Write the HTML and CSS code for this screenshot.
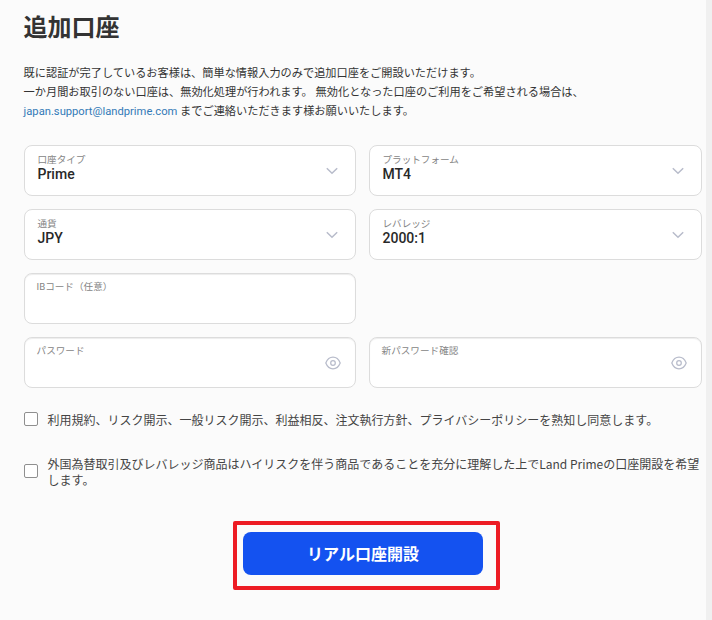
FILE: index.html
```html
<!DOCTYPE html>
<html lang="ja">
<head>
<meta charset="utf-8">
<title>追加口座</title>
<link rel="stylesheet" href="styles.css">
</head>
<body>
<main class="page">
  <h1 class="title">追加口座</h1>
  <p class="intro">既に認証が完了しているお客様は、簡単な情報入力のみで追加口座をご開設いただけます。<br>一か月間お取引のない口座は、無効化処理が行われます。 無効化となった口座のご利用をご希望される場合は、<br><a class="mail" href="#">japan.support@landprime.com</a> までご連絡いただきます様お願いいたします。</p>
  <div class="fields">
    <div class="field"><div><div class="label">口座タイプ</div><div class="value">Prime</div></div>
      <svg class="chevron" viewBox="0 0 12 8"><path d="M.8 1.2 6 6.3l5.2-5.1"/></svg></div>
    <div class="field"><div><div class="label">プラットフォーム</div><div class="value">MT4</div></div>
      <svg class="chevron" viewBox="0 0 12 8"><path d="M.8 1.2 6 6.3l5.2-5.1"/></svg></div>
    <div class="field"><div><div class="label">通貨</div><div class="value">JPY</div></div>
      <svg class="chevron" viewBox="0 0 12 8"><path d="M.8 1.2 6 6.3l5.2-5.1"/></svg></div>
    <div class="field"><div><div class="label">レバレッジ</div><div class="value">2000:1</div></div>
      <svg class="chevron" viewBox="0 0 12 8"><path d="M.8 1.2 6 6.3l5.2-5.1"/></svg></div>
    <div class="field input"><div class="label">IBコード（任意）</div></div>
    <div class="field input first"><div class="label">パスワード</div>
      <svg class="eye" viewBox="0 0 16 14"><path d="M.8 7C2.3 3.200 4.800 1.200 8 1.200S13.700 3.200 15.200 7C13.700 10.800 11.200 12.800 8 12.800S2.300 10.800.8 7Z"/><circle cx="8" cy="7" r="2.300"/></svg></div>
    <div class="field input"><div class="label">新パスワード確認</div>
      <svg class="eye" viewBox="0 0 16 14"><path d="M.8 7C2.3 3.200 4.800 1.200 8 1.200S13.700 3.200 15.200 7C13.700 10.800 11.200 12.800 8 12.800S2.300 10.800.8 7Z"/><circle cx="8" cy="7" r="2.300"/></svg></div>
  </div>
  <label class="agree"><input class="check" type="checkbox"><span>利用規約、リスク開示、一般リスク開示、利益相反、注文執行方針、プライバシーポリシーを熟知し同意します。</span></label>
  <label class="agree risk"><input class="check" type="checkbox"><span>外国為替取引及びレバレッジ商品はハイリスクを伴う商品であることを充分に理解した上でLand Primeの口座開設を希望<br>します。</span></label>
  <div class="highlight"><button class="submit" type="button">リアル口座開設</button></div>
</main>
</body>
</html>
```
FILE: styles.css
```css
* { box-sizing: border-box; }
body {
  margin: 0;
  background: #f0f0f0;
  font-family: Roboto, "Noto Sans CJK JP", sans-serif;
  color: #333;
}
.page {
  width: 706px;
  height: 620px;
  padding: 10px 4px 0 23.600px;
  background: #fbfbfb;
  overflow: hidden;
}
.title {
  margin: 0;
  font-size: 24px;
  line-height: 36px;
  font-weight: 700;
}
.intro {
  margin: 18px 0 0;
  font-size: 11.2px;
  line-height: 19px;
  white-space: nowrap;
}
.mail { color: #337ab7; text-decoration: none; }
.fields {
  display: grid;
  grid-template-columns: 332px 333px;
  grid-auto-rows: 51px;
  gap: 13px;
  margin: 24px 0 0 .4px;
}
.field {
  display: flex;
  justify-content: space-between;
  align-items: flex-start;
  padding: 7px 16.500px 0 12.500px;
  border: 1px solid #dcdcdc;
  border-radius: 8px;
  background: #fff;
}
.input {
  padding: 6px 13.500px 0 11.600px;
  box-shadow: inset 0 1px 1px rgba(0, 0, 0, .075);
}
.first { grid-column: 1; }
.label { font-size: 9.600px; line-height: 14px; color: #858585; }
.value { margin-top: -1px; font-size: 14px; line-height: 16px; font-weight: 500; color: #282828; }
.chevron, .eye { fill: none; stroke: #b8bccb; stroke-width: 1.500; }
.chevron { width: 12px; height: 8px; margin-top: 13.500px; }
.eye { width: 16px; height: 14px; margin-top: 11.500px; stroke-width: 1.250; }
.agree {
  display: flex;
  align-items: center;
  gap: 10px;
  height: 32px;
  margin-top: 16px;
  font-family: "Noto Sans CJK JP", sans-serif;
  font-size: 12px;
  line-height: 16px;
  color: #444;
  white-space: nowrap;
}
.risk { margin-top: 20px; }
.check {
  appearance: none;
  flex: none;
  width: 14px;
  height: 14px;
  margin: 0 0 2px;
  border: 1px solid #8f8f8f;
  border-radius: 2px;
  background: #fff;
}
.highlight {
  width: 267px;
  height: 69px;
  margin: 33px 0 0 209.400px;
  padding: 7px 6px;
  border: 4px solid #ed1c24;
  border-radius: 2px;
}
.submit {
  display: block;
  width: 240px;
  height: 43px;
  padding: 0;
  border: 0;
  border-radius: 8px;
  background: #1452f0;
  color: #fff;
  font: 700 16px/43px "Noto Sans CJK JP", sans-serif;
}
```
